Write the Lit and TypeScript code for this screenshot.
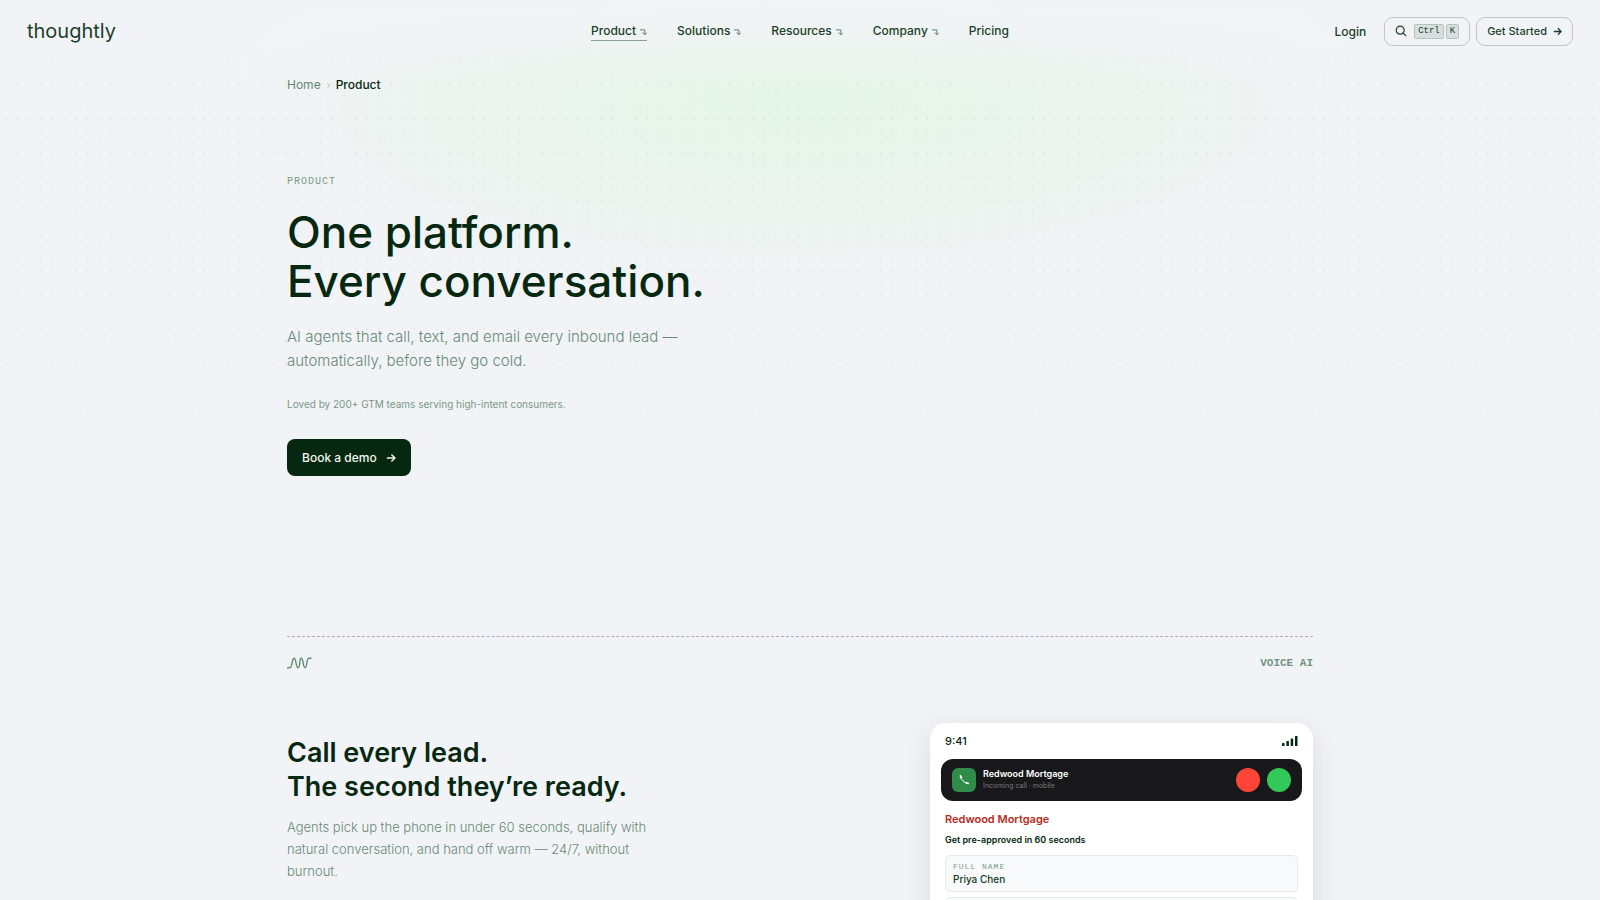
import { LitElement, html, css, svg } from "lit";
import { customElement } from "lit/decorators.js";

const arrow = svg`<path d="M1 6h9.500M6.500 1.700 10.800 6 6.500 10.300" fill="none" stroke="currentColor" stroke-width="1.700" />`;

@customElement("app-root")
export class AppRoot extends LitElement {
  static styles = css`
    :host {
      display: block;
      position: relative;
      height: 100vh;
      overflow: hidden;
      background: #f2f3f7;
      color: #062810;
      font-family: Inter, "Liberation Sans", sans-serif;
      font-size: 12px;
    }
    * { box-sizing: border-box; }
    a { color: inherit; text-decoration: none; }
    h1, h2, p { margin: 0; }
    .glow, .dots { position: absolute; inset: 0; pointer-events: none; }
    .glow {
      background:
        linear-gradient(#f2f3f7, rgba(242, 243, 247, 0) 90px),
        radial-gradient(ellipse 38% 200px at 50% 100px, rgba(220, 247, 220, 0.6), rgba(220, 247, 220, 0.35) 45%, rgba(220, 247, 220, 0) 100%);
    }
    .dots { width: 100%; height: 500px; -webkit-mask-image: linear-gradient(transparent 36px, #000 90px, #000 280px, transparent 500px); mask-image: linear-gradient(transparent 36px, #000 90px, #000 280px, transparent 500px); }
    header { position: relative; display: grid; grid-template-columns: 1fr auto 1fr; align-items: center; height: 62px; padding: 0 27px; color: #1b3f2a; font-weight: 500; }
    .logo { font-size: 20px; font-weight: 400; }
    nav.main { display: flex; gap: 30px; }
    .item { display: flex; align-items: center; gap: 4px; line-height: 18px; border-bottom: 1px solid transparent; margin-top: 1px; }
    .item.on { border-color: #8ba497; }
    .item svg { width: 7px; height: 7px; margin-top: 3px; color: #4f7561; }
    .tools { display: flex; justify-content: flex-end; align-items: center; }
    .login { margin-right: 18px; }
    button { font: inherit; color: inherit; background: transparent; cursor: pointer; }
    .pill { display: flex; align-items: center; height: 29px; border: 1px solid #bcc8c3; border-radius: 9px; padding: 0 10px; }
    .search { margin-right: 6px; gap: 2px; }
    .search svg { width: 12px; height: 12px; margin-right: 5px; }
    kbd { font: 9px/13px "Liberation Mono", monospace; background: #d8dfde; border: 1px solid #b5c3bd; border-radius: 2px; padding: 0 3px; }
    .start { gap: 6px; font-size: 11px; }
    .start svg { width: 9px; height: 9px; }
    main { position: relative; width: calc(100% - 54px); max-width: 1026px; margin: 0 auto; }
    .crumbs { display: flex; align-items: center; gap: 5px; padding-top: 14px; line-height: 18px; color: #668a75; }
    .crumbs svg { width: 5px; height: 7px; color: #aebdb5; }
    .crumbs .here { color: #062810; font-weight: 500; }
    .mono { font-family: "Liberation Mono", monospace; font-size: 10px; line-height: 14px; letter-spacing: 1px; color: #7c9c89; }
    .kicker { margin-top: 81px; }
    h1 { margin-top: 19px; font-size: 44px; line-height: 49px; font-weight: 500; }
    .lead { margin-top: 19px; max-width: 410px; font-size: 15px; line-height: 24px; font-weight: 300; color: #668a75; }
    .loved { margin-top: 23px; font-size: 10px; line-height: 16px; font-weight: 400; color: #7a9886; }
    .cta { display: flex; align-items: center; gap: 9px; margin-top: 27px; height: 37px; padding: 0 15px; border: 0; border-radius: 8px; background: #062810; color: #f1f8ee; font-weight: 500; }
    .cta svg { width: 10px; height: 10px; }
    .rule { margin-top: 160px; border-top: 1px dashed #a5adc0; }
    .tag { display: flex; justify-content: space-between; align-items: center; margin-top: 19px; color: #5f8f70; }
    .tag svg { width: 25px; height: 12px; }
    .tag .mono { font-size: 11px; letter-spacing: 0; font-weight: 700; color: #6f937e; }
    .split { display: flex; justify-content: space-between; align-items: flex-start; margin-top: 53px; }
    .copy { margin-top: 13px; max-width: 370px; }
    h2 { font-size: 27px; line-height: 34px; font-weight: 600; white-space: nowrap; }
    .copy p { margin-top: 12px; font-size: 13px; line-height: 22px; font-weight: 300; color: #668a75; }
    .phone { width: 383px; background: #fff; border-radius: 16px; padding: 11px; box-shadow: 0 8px 28px rgba(30, 50, 60, 0.12); height: 500px; }
    .status { display: flex; justify-content: space-between; align-items: center; padding: 0 4px; font-size: 11px; line-height: 14px; font-weight: 500; }
    .status svg { width: 16px; height: 10px; }
    .call { display: flex; align-items: center; gap: 7px; margin-top: 11px; height: 42px; padding: 0 11px; border-radius: 12px; background: #18181a; color: #fff; }
    .app { display: grid; place-items: center; width: 24px; height: 24px; border-radius: 6px; background: #2f8c49; }
    .app svg { width: 12px; height: 12px; }
    .who { flex: 1; font-size: 9px; line-height: 12px; font-weight: 600; }
    .sub { font-size: 7px; font-weight: 400; color: #77777c; }
    .dot { width: 24px; height: 24px; border: 0; border-radius: 50%; background: #ff453a; padding: 0; }
    .dot.yes { background: #34c759; }
    .form { padding: 9px 4px; }
    .brand { font-size: 11px; line-height: 18px; font-weight: 600; color: #b92a1c; }
    .ask { margin-top: 4px; font-size: 9px; line-height: 16px; font-weight: 600; }
    .field { display: block; margin-top: 7px; height: 37px; padding: 6px 7px; border: 1px solid #e5eaea; border-radius: 5px; background: #f8f9fb; }
    .field + .field { margin-top: 5px; }
    .field .mono { display: block; font-size: 8px; line-height: 10px; }
    input { display: block; width: 100%; border: 0; padding: 0; background: transparent; font: 500 10px/14px Inter, sans-serif; color: #123a20; outline: 0; }
  `;

  private item(name: string, menu = true, on = false) {
    return html`<a class="item ${on ? "on" : ""}" href="#">${name}${menu
      ? html`<svg viewBox="0 0 8 8" fill="none" stroke="currentColor"><path d="M0 1h5.500v5M3 4l2.500 2.700L8 4" /></svg>` : ""}</a>`;
  }

  render() {
    return html`
      <div class="glow"></div>
      <svg class="dots" aria-hidden="true">
        <defs><pattern id="grid" width="35" height="35" y="-3.5" patternUnits="userSpaceOnUse">
          ${[0, 1, 2].map((r) => [0, 1, 2].map((c) => svg`<circle cx=${(c + 0.5) * 35 / 3} cy=${(r + 0.5) * 35 / 3} r="0.7" fill="#123a20" fill-opacity="0.14" />`))}
        </pattern></defs>
        <rect width="100%" height="100%" fill="url(#grid)" />
      </svg>
      <header>
        <a class="logo" href="#">thoughtly</a>
        <nav class="main">
          ${this.item("Product", true, true)}${this.item("Solutions")}${this.item("Resources")}${this.item("Company")}${this.item("Pricing", false)}
        </nav>
        <div class="tools">
          <a class="login" href="#">Login</a>
          <button class="pill search" aria-label="Search">
            <svg viewBox="0 0 12 12" fill="none" stroke="currentColor" stroke-width="1.2"><circle cx="5.2" cy="5.2" r="4" /><path d="m8.2 8.2 3 3" /></svg>
            <kbd>Ctrl</kbd><kbd>K</kbd>
          </button>
          <button class="pill start">Get Started <svg viewBox="0 0 12 12">${arrow}</svg></button>
        </div>
      </header>
      <main>
        <nav class="crumbs">
          <a href="#">Home</a>
          <svg viewBox="0 0 5 7" fill="none" stroke="currentColor"><path d="m1.500 1.500 2 2-2 2" /></svg>
          <span class="here">Product</span>
        </nav>
        <p class="mono kicker">PRODUCT</p>
        <h1>One platform.<br />Every conversation.</h1>
        <p class="lead">AI agents that call, text, and email every inbound lead — automatically, before they go cold.</p>
        <p class="loved">Loved by 200+ GTM teams serving high-intent consumers.</p>
        <button class="cta">Book a demo <svg viewBox="0 0 12 12">${arrow}</svg></button>
        <div class="rule"></div>
        <div class="tag">
          <svg viewBox="0 0 25 12" fill="none" stroke="currentColor" stroke-width="1.400"><path d="M0 10.700h2.500C6 10.700 4.500 1.200 7 1.200S8.500 10.700 11 10.700 12 1.200 14.200 1.200 16 10.700 18 10.700C20.500 10.700 19 1.200 22 1.200h2.500" /></svg>
          <span class="mono">VOICE AI</span>
        </div>
        <section class="split">
          <div class="copy">
            <h2>Call every lead.<br />The second they’re ready.</h2>
            <p>Agents pick up the phone in under 60 seconds, qualify with natural conversation, and hand off warm — 24/7, without burnout.</p>
          </div>
          <div class="phone">
            <div class="status"><span>9:41</span>
              <svg viewBox="0 0 16 10" fill="currentColor"><rect y="7" width="2.500" height="3" rx=".5" /><rect x="4.400" y="5" width="2.500" height="5" rx=".5" /><rect x="8.700" y="2.500" width="2.500" height="7.500" rx=".5" /><rect x="13" width="2.500" height="10" rx=".5" /></svg>
            </div>
            <div class="call">
              <span class="app"><svg viewBox="0 0 12 12" fill="none" stroke="#fff" stroke-linecap="round"><path d="M2.500 2C3 5.500 6 9 10 9.500" /><path d="M2.500 2l.6 1.600M8.500 9l1.500.4" stroke-width="1.800" /></svg></span>
              <div class="who">Redwood Mortgage<div class="sub">Incoming call · mobile</div></div>
              <button class="dot" aria-label="Decline"></button>
              <button class="dot yes" aria-label="Accept"></button>
            </div>
            <div class="form">
              <div class="brand">Redwood Mortgage</div>
              <div class="ask">Get pre-approved in 60 seconds</div>
              <label class="field"><span class="mono">FULL NAME</span><input value="Priya Chen" /></label>
              <div class="field"></div>
            </div>
          </div>
        </section>
      </main>
    `;
  }
}
